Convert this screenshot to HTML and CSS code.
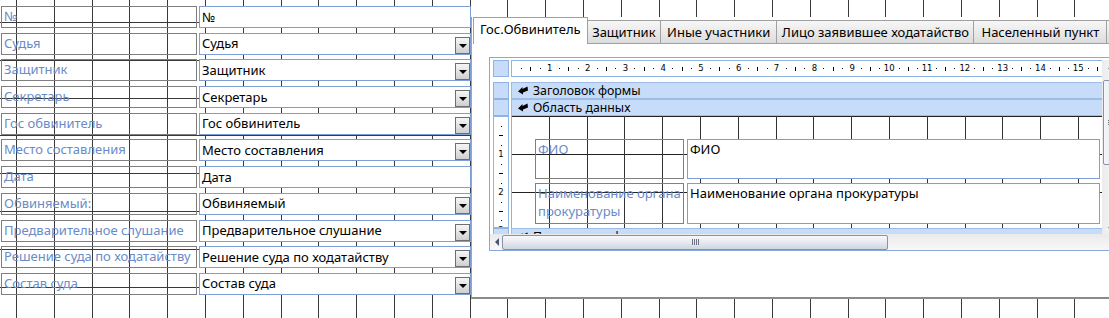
FILE: index.html
```html
<!DOCTYPE html>
<html lang="ru">
<head>
<meta charset="utf-8">
<title>Форма</title>
<link rel="stylesheet" href="styles.css">
</head>
<body>
<div class="canvas">
  <div class="fields">
    <div class="lbl">№</div><div class="tb">№</div>
    <div class="lbl">Судья</div><div class="tb">Судья<span class="drop"></span></div>
    <div class="lbl">Защитник</div><div class="tb">Защитник<span class="drop"></span></div>
    <div class="lbl">Секретарь</div><div class="tb">Секретарь<span class="drop"></span></div>
    <div class="lbl">Гос обвинитель</div><div class="tb">Гос обвинитель<span class="drop"></span></div>
    <div class="lbl">Место составления</div><div class="tb">Место составления<span class="drop"></span></div>
    <div class="lbl">Дата</div><div class="tb">Дата</div>
    <div class="lbl">Обвиняемый:</div><div class="tb">Обвиняемый<span class="drop"></span></div>
    <div class="lbl">Предварительное слушание</div><div class="tb">Предварительное слушание<span class="drop"></span></div>
    <div class="lbl">Решение суда по ходатайству</div><div class="tb">Решение суда по ходатайству<span class="drop"></span></div>
    <div class="lbl">Состав суда</div><div class="tb">Состав суда<span class="drop"></span></div>
  </div>

  <div class="tabctl">
    <div class="tabs">
      <div class="tab active">Гос.Обвинитель</div>
      <div class="tab tab-narrow">Защитник</div>
      <div class="tab">Иные участники</div>
      <div class="tab tab-narrow">Лицо заявившее ходатайство</div>
      <div class="tab tab-wide">Населенный пункт</div>
      <div class="tab tab-more"></div>
    </div>
    <div class="page">
      <div class="sf">
        <div class="sf-top">
          <div class="sf-main">
            <div class="row">
              <div class="lc"></div>
              <div class="ruler">
                <div class="cm"><i class="d"></i><i class="t"></i><i class="d"></i><b>1</b></div>
                <div class="cm"><i class="d"></i><i class="t"></i><i class="d"></i><b>2</b></div>
                <div class="cm"><i class="d"></i><i class="t"></i><i class="d"></i><b>3</b></div>
                <div class="cm"><i class="d"></i><i class="t"></i><i class="d"></i><b>4</b></div>
                <div class="cm"><i class="d"></i><i class="t"></i><i class="d"></i><b>5</b></div>
                <div class="cm"><i class="d"></i><i class="t"></i><i class="d"></i><b>6</b></div>
                <div class="cm"><i class="d"></i><i class="t"></i><i class="d"></i><b>7</b></div>
                <div class="cm"><i class="d"></i><i class="t"></i><i class="d"></i><b>8</b></div>
                <div class="cm"><i class="d"></i><i class="t"></i><i class="d"></i><b>9</b></div>
                <div class="cm"><i class="d"></i><i class="t"></i><i class="d"></i><b>10</b></div>
                <div class="cm"><i class="d"></i><i class="t"></i><i class="d"></i><b>11</b></div>
                <div class="cm"><i class="d"></i><i class="t"></i><i class="d"></i><b>12</b></div>
                <div class="cm"><i class="d"></i><i class="t"></i><i class="d"></i><b>13</b></div>
                <div class="cm"><i class="d"></i><i class="t"></i><i class="d"></i><b>14</b></div>
                <div class="cm"><i class="d"></i><i class="t"></i><i class="d"></i><b>15</b></div>
                <div class="cm"><i class="d"></i><i class="t"></i><i class="d"></i><b>16</b></div>
              </div>
            </div>
            <div class="row row-hdr">
              <div class="lc lc-blue"></div>
              <div class="bar"><svg class="sec" viewBox="0 0 10 9" width="10" height="9"><path d="M0 5.5 L4.5 1 L4.5 3 L9.5 0.5 L10 4.5 L5 6.5 L5 8.5 Z" fill="#000"/></svg>Заголовок формы</div>
            </div>
            <div class="row">
              <div class="lc lc-blue"></div>
              <div class="bar"><svg class="sec" viewBox="0 0 10 9" width="10" height="9"><path d="M0 5.5 L4.5 1 L4.5 3 L9.5 0.5 L10 4.5 L5 6.5 L5 8.5 Z" fill="#000"/></svg>Область данных</div>
            </div>
            <div class="row">
              <div class="lc vruler">
                <div class="vcm"><i class="d"></i><i class="t"></i><i class="d"></i><b>1</b></div>
                <div class="vcm"><i class="d"></i><i class="t"></i><i class="d"></i><b>2</b></div>
                <div class="vcm"><i class="d"></i><i class="t"></i><i class="d"></i><b>3</b></div>
              </div>
              <div class="design">
                <div class="dlbl">ФИО</div><div class="dtb">ФИО</div>
                <div class="dlbl">Наименование органа прокуратуры</div><div class="dtb">Наименование органа прокуратуры</div>
              </div>
            </div>
            <div class="row">
              <div class="lc lc-blue"></div>
              <div class="bar"><svg class="sec" viewBox="0 0 10 9" width="10" height="9"><path d="M0 5.5 L4.5 1 L4.5 3 L9.5 0.5 L10 4.5 L5 6.5 L5 8.5 Z" fill="#000"/></svg>Примечание формы</div>
            </div>
          </div>
          <div class="vscroll">
            <span class="arr-up"></span>
            <span class="vthumb"><span class="grip-h"></span></span>
            <span class="arr-down"></span>
          </div>
        </div>
        <div class="hscroll">
          <span class="arr-left"></span>
          <span class="hthumb"><span class="grip-v"></span></span>
          <span class="arr-right"></span>
        </div>
      </div>
    </div>
  </div>
</div>
</body>
</html>
```

FILE: styles.css
```css
html, body {
  margin: 0;
  padding: 0;
  background: #fff;
}

.canvas {
  width: 1109px;
  height: 318px;
  overflow: hidden;
  display: flex;
  align-items: flex-start;
  font-family: "Noto Sans", "Open Sans", sans-serif;
  background-color: #fff;
  background-image:
    repeating-linear-gradient(to right, transparent 0, transparent 16px, #3a3a3a 16px, #3a3a3a 17px, transparent 17px, transparent 37.8px),
    repeating-linear-gradient(to bottom, transparent 0, transparent 22px, #3a3a3a 22px, #3a3a3a 23px, transparent 23px, transparent 37.8px);
}

/* left column of fields */
.fields {
  flex: none;
  display: grid;
  grid-template-columns: 196px 272px;
  column-gap: 2px;
  grid-auto-rows: 22px;
  row-gap: 4.7px;
  padding: 6px 0 0 1px;
}

.lbl {
  box-sizing: border-box;
  border: 1px solid #7f7f7f;
  color: #6a8bc8;
  font-size: 13px;
  line-height: 19px;
  padding-left: 2px;
  white-space: nowrap;
  overflow: hidden;
}

.tb {
  box-sizing: border-box;
  border: 1px solid #7e9fd6;
  background: #fff;
  color: #000;
  font-size: 13px;
  line-height: 19px;
  padding-left: 2px;
  white-space: nowrap;
  display: flex;
  align-items: center;
}

.drop {
  margin-left: auto;
  align-self: flex-end;
  width: 15px;
  height: 17px;
  box-sizing: border-box;
  border: 1px solid #6e6e6e;
  background: linear-gradient(#f6f6f6, #cfcfcf);
  display: flex;
  align-items: center;
  justify-content: center;
}

.drop::after {
  content: "";
  border-left: 4px solid transparent;
  border-right: 4px solid transparent;
  border-top: 4px solid #000;
  margin-top: 1px;
}

/* tab control */
.tabctl {
  flex: 1;
  min-width: 0;
  margin-top: 17px;
  height: 282px;
  box-sizing: border-box;
  border-left: 1px solid #a3a3a3;
  border-bottom: 2px solid #8a8a8a;
  background: #fff;
  display: flex;
  flex-direction: column;
  overflow: hidden;
}

.tabs {
  flex: none;
  display: flex;
  align-items: flex-end;
  height: 27px;
  padding-left: 1px;
}

.tab {
  flex: none;
  box-sizing: border-box;
  height: 24px;
  padding: 0 6px;
  font-size: 13px;
  line-height: 22px;
  white-space: nowrap;
  color: #000;
  border: 1px solid #a0a0a0;
  border-left: none;
  background: linear-gradient(#f7f7f7, #dcdcdc);
}

.tab.active {
  height: 27px;
  line-height: 23px;
  border-left: 1px solid #a0a0a0;
  border-bottom: none;
  background: #fff;
}

.tab-narrow {
  padding: 0 4.5px;
}

.tab-wide {
  padding: 0 7px;
}

.tab-more {
  width: 40px;
}

.page {
  flex: 1;
  padding: 13px 0 0 17px;
  overflow: hidden;
}

/* subform in design view */
.sf {
  width: 650px;
  height: 194px;
  box-sizing: border-box;
  border: 1px solid #86a9da;
  display: flex;
  flex-direction: column;
  background: #fff;
}

.sf-top {
  flex: 1;
  min-height: 0;
  display: flex;
}

.sf-main {
  flex: none;
  width: 612px;
  box-sizing: border-box;
  padding: 2px 0 0 3px;
  display: flex;
  flex-direction: column;
  overflow: hidden;
}

.row {
  flex: none;
  display: flex;
  column-gap: 2px;
}

.row-hdr {
  margin-top: 5px;
}

.lc {
  flex: none;
  width: 16px;
  box-sizing: border-box;
  border: 1px solid #8fb3e3;
  background: #c6dcf8;
}

.lc-blue {
  height: 17px;
}

.ruler {
  flex: 1;
  height: 17px;
  box-sizing: border-box;
  border: 1px solid #8fb3e3;
  border-right: none;
  background: #fff;
  display: flex;
  padding-left: 4.725px;
  overflow: hidden;
}

.cm {
  flex: none;
  width: 37.8px;
  display: grid;
  grid-template-columns: repeat(4, 1fr);
  align-items: center;
  justify-items: center;
}

.cm .d {
  width: 1px;
  height: 1px;
  background: #000;
}

.cm .t {
  width: 1px;
  height: 4px;
  background: #000;
}

.cm b, .vcm b {
  font-family: "DejaVu Sans", sans-serif;
  font-weight: normal;
  font-size: 8.5px;
  line-height: 9px;
  color: #000;
}

.bar {
  flex: 1;
  height: 17px;
  box-sizing: border-box;
  border: 1px solid #9dbde6;
  border-right: none;
  background: #c6dcf8;
  display: flex;
  align-items: center;
  font-size: 12.3px;
  color: #000;
  white-space: nowrap;
}

.sec {
  margin: 0 5px 0 6px;
  flex: none;
}

.vruler {
  height: 112px;
  background: #fff;
  display: flex;
  flex-direction: column;
  padding-top: 4.725px;
  overflow: hidden;
}

.vcm {
  flex: none;
  height: 37.8px;
  display: grid;
  grid-template-rows: repeat(4, 1fr);
  align-items: center;
  justify-items: center;
}

.vcm .d {
  width: 1px;
  height: 1px;
  background: #000;
}

.vcm .t {
  width: 4px;
  height: 1px;
  background: #000;
}

.design {
  flex: 1;
  height: 112px;
  box-sizing: border-box;
  border-left: 1px solid #8fb3e3;
  background-color: #fff;
  background-image:
    repeating-linear-gradient(to right, transparent 0, transparent 36.8px, #333 36.8px, #333 37.8px),
    repeating-linear-gradient(to bottom, #222 0, #222 1px, transparent 1px, transparent 37.8px);
  display: grid;
  grid-template-columns: 149px 413px;
  grid-template-rows: 40px 41px;
  column-gap: 3px;
  row-gap: 4px;
  padding: 23px 0 0 23px;
  align-content: start;
}

.dlbl {
  box-sizing: border-box;
  border: 1px solid #808080;
  color: #6a8bc8;
  font-size: 13px;
  line-height: 18px;
  padding: 0 2px;
}

.dtb {
  box-sizing: border-box;
  border: 1px solid #7e9fd6;
  background: #fff;
  color: #000;
  font-size: 13px;
  line-height: 18px;
  padding: 0 2px;
}

/* scrollbars */
.vscroll {
  flex: none;
  width: 17px;
  box-sizing: border-box;
  margin-top: 2px;
  background: linear-gradient(to right, #ececec, #f7f7f7);
  display: flex;
  flex-direction: column;
  align-items: center;
  padding-top: 5px;
}

.arr-up {
  border-left: 3px solid transparent;
  border-right: 3px solid transparent;
  border-bottom: 4px solid #4a5675;
}

.vthumb {
  margin-top: 11px;
  width: 15px;
  height: 85px;
  box-sizing: border-box;
  border: 1px solid #8893a8;
  border-radius: 2px;
  background: linear-gradient(to right, #f6f7f9, #dde2ea);
  display: flex;
  align-items: center;
  justify-content: center;
}

.grip-h {
  width: 6px;
  height: 5px;
  background: repeating-linear-gradient(to bottom, #6b7280 0, #6b7280 1px, transparent 1px, transparent 2px);
}

.arr-down {
  margin-top: auto;
  margin-bottom: 3px;
  border-left: 3px solid transparent;
  border-right: 3px solid transparent;
  border-top: 4px solid #4a5675;
}

.hscroll {
  flex: none;
  height: 16px;
  box-sizing: border-box;
  background: linear-gradient(#eaeaea, #f8f8f8);
  display: flex;
  align-items: center;
  padding: 0 10px 0 5px;
}

.arr-left {
  border-top: 4px solid transparent;
  border-bottom: 4px solid transparent;
  border-right: 4px solid #4a5675;
}

.hthumb {
  margin-left: 3px;
  width: 386px;
  height: 15px;
  box-sizing: border-box;
  border: 1px solid #8893a8;
  border-radius: 2px;
  background: linear-gradient(#f8f9fb, #e6e9ef 50%, #cfd5e0);
  display: flex;
  align-items: center;
  justify-content: center;
}

.grip-v {
  width: 7px;
  height: 6px;
  background: repeating-linear-gradient(to right, #6b7280 0, #6b7280 1px, transparent 1px, transparent 2px);
}

.arr-right {
  margin-left: auto;
  border-top: 4px solid transparent;
  border-bottom: 4px solid transparent;
  border-left: 4px solid #4a5675;
}
```
